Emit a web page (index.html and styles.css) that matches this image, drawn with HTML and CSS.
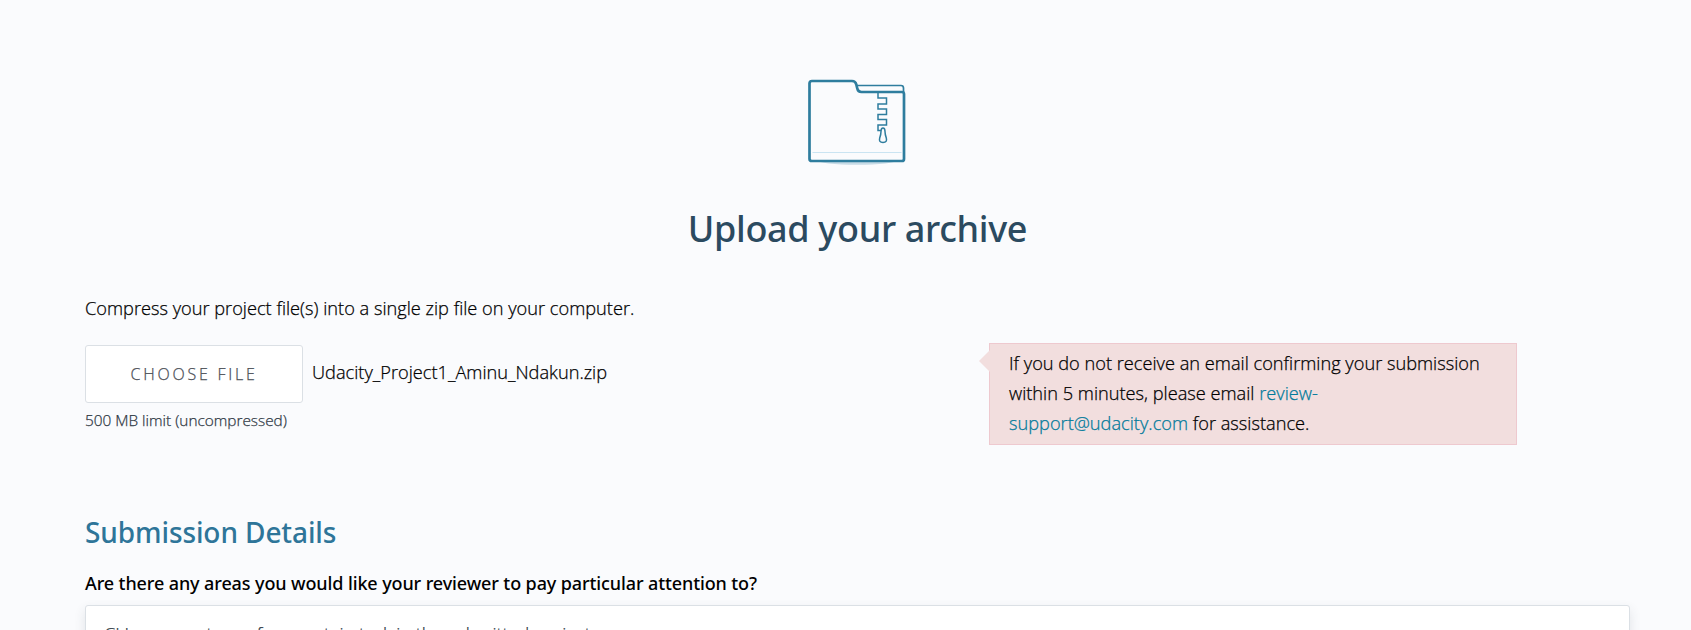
FILE: index.html
```html
<!DOCTYPE html>
<html lang="en">
<head>
<meta charset="utf-8">
<title>Upload your archive</title>
<link rel="stylesheet" href="styles.css">
</head>
<body>
<main class="page">
  <header class="hero">
    <svg class="folder" width="100" height="90" viewBox="0 0 100 90" fill="none" stroke="#2e7d9e">
      <ellipse cx="50" cy="81.500" rx="40" ry="4.200" fill="#c7dbe6" stroke="none"/>
      <path d="M50 6.500H94Q96.500 6.500 96.500 9V13" stroke-width="1.700"/>
      <path d="M5 2H45Q48.500 2 49.300 5.500L50.300 9.500Q51 13 54.500 13H95Q97 13 97 15V80Q97 82 95 82H5Q2.500 82 2.500 80V4.500Q2.500 2 5 2Z" fill="#fafbfd" stroke-width="2.700" stroke-linejoin="round"/>
      <path d="M5.500 73.500H94.500" stroke="#cae4f2" stroke-width="1.200"/>
      <path d="M71 13.500V19H79.500V25H71V30H79.500V35.500H71V40.500H79.500V46H71V51.500H74" stroke-width="1.500"/>
      <path d="M74 52.500Q74 49 76 49Q78 49 78 52.500Q78 55.500 79.300 59Q80.500 63.500 76 63.500Q71.500 63.500 72.700 59Q74 55.500 74 52.500Z" fill="#fafbfd" stroke-width="1.500"/>
    </svg>
    <h1 class="title">Upload your archive</h1>
  </header>
  <p class="intro">Compress your project file(s) into a single zip file on your computer.</p>
  <section class="upload">
    <div class="upload-main">
      <div class="picker">
        <button class="choose" type="button">CHOOSE FILE</button>
        <span class="filename">Udacity_Project1_Aminu_Ndakun.zip</span>
      </div>
      <p class="limit">500 MB limit (uncompressed)</p>
    </div>
    <aside class="notice">If you do not receive an email confirming your submission within 5 minutes, please email <a class="link">review-<br>support@udacity.com</a> for assistance.</aside>
  </section>
  <h2 class="subtitle">Submission Details</h2>
  <p class="question">Are there any areas you would like your reviewer to pay particular attention to?</p>
  <div class="field">CLI arguments are for a certain task in the submitted project</div>
</main>
</body>
</html>
```
FILE: styles.css
```css
* { box-sizing: border-box; }
html { overflow: hidden; }
body {
  margin: 0;
  height: 630px;
  overflow: hidden;
  background: #fafbfd;
  color: #000;
  font: 300 18.22px/30px "Open Sans", "Noto Sans", sans-serif;
  -webkit-text-stroke-width: .25px;
}
h1, h2, p { margin: 0; }
.page { height: 630px; overflow: hidden; padding: 79px 61px 0 85px; }
.hero { display: flex; flex-direction: column; align-items: center; }
.folder { display: block; margin-right: 2px; }
.title {
  margin-top: 35px;
  color: #2b4a60;
  font: 500 36px/50px "Noto Sans", sans-serif;
  letter-spacing: -.34px;
  -webkit-text-stroke-width: 0;
}
.intro { margin-top: 39px; }
.upload {
  display: flex;
  justify-content: space-between;
  align-items: flex-start;
  margin-top: 20px;
  padding-right: 113px;
}
.upload-main { padding-top: 2px; }
.picker { display: flex; align-items: center; gap: 9px; }
.choose {
  width: 218px;
  height: 58px;
  padding: 0;
  border: 1px solid #dbe0e5;
  border-radius: 3px;
  background: #fff;
  color: #4a4e56;
  font: 300 16px/24px "Open Sans", sans-serif;
  letter-spacing: 2.75px;
}
.filename { margin-top: -5px; }
.limit { margin-top: 2px; font-size: 15.35px; color: #2f3944; }
.notice {
  position: relative;
  width: 528px;
  height: 102px;
  padding: 4px 19px;
  border: 1px solid #eec9cf;
  background: #f2dede;
}
.notice::before {
  content: "";
  position: absolute;
  top: 6px;
  left: -11px;
  border: solid transparent;
  border-width: 11px 11px 11px 0;
  border-right-color: #f2dede;
}
.link { color: #017a9b; }
.subtitle {
  margin-top: 67px;
  color: #2e7599;
  font: 500 28px/40px "Noto Sans", sans-serif;
  letter-spacing: -.1px;
  -webkit-text-stroke-width: 0;
}
.question {
  margin-top: 16px;
  font: 500 18px/30px "Noto Sans", sans-serif;
  letter-spacing: -.11px;
  -webkit-text-stroke-width: 0;
}
.field {
  height: 120px;
  margin-top: 7px;
  padding: 13px 18px;
  border: 1px solid #dbe0e5;
  border-radius: 3px;
  background: #fff;
  box-shadow: 0 5px 12px rgba(46, 61, 73, .12);
  color: #2f3944;
  font-size: 18px;
}
```
